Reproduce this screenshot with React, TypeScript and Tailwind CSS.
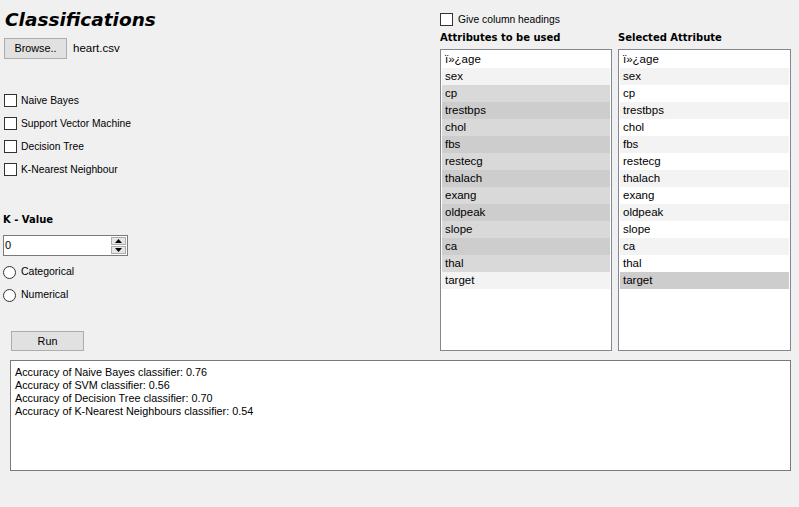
import React from "react";

const attrs = ["ï»¿age", "sex", "cp", "trestbps", "chol", "fbs", "restecg", "thalach", "exang", "oldpeak", "slope", "ca", "thal", "target"];

function rowBg(i: number, selected: boolean) {
  if (selected) return i % 2 === 0 ? "bg-[#d9d9d9]" : "bg-[#cdcdcd]";
  return i % 2 === 0 ? "bg-white" : "bg-[#f3f3f3]";
}

function Check({ label }: { label: string }) {
  return (
    <div className="flex h-[23px] items-center pl-[4px]">
      <div className="h-[13px] w-[13px] border border-[#333333] bg-white" />
      <span className="ml-[4px] text-[10.3px] text-black">{label}</span>
    </div>
  );
}

function Radio({ label }: { label: string }) {
  return (
    <div className="flex h-[23px] items-center pl-[3px]">
      <div className="h-[13px] w-[13px] rounded-full border border-[#333333] bg-white" />
      <span className="ml-[5px] text-[10.5px] text-black">{label}</span>
    </div>
  );
}

function List({ selected }: { selected: (i: number) => boolean }) {
  return (
    <div className="h-[302px] border border-[#828790] bg-white p-px">
      {attrs.map((a, i) => (
        <div key={a} className={`flex h-[17px] items-center pl-[3px] pt-px text-[11.5px] text-black ${rowBg(i, selected(i))}`}>
          {a}
        </div>
      ))}
    </div>
  );
}

export default function App() {
  return (
    <div className="h-[507px] w-[799px] overflow-hidden bg-[#f0f0f0]" style={{ fontFamily: '"Liberation Sans", Arial, sans-serif' }}>
      <div className="flex h-[351px]">
        {/* left column */}
        <div className="flex w-[440px] flex-col">
          <div className="ml-[5px] mt-[8px] h-[24px] text-[18.5px] font-bold italic leading-[24px] text-black" style={{ fontFamily: '"DejaVu Sans", sans-serif' }}>
            Classifications
          </div>
          <div className="mt-[6px] flex items-center">
            <div className="ml-[4px] flex h-[21px] w-[63px] items-center justify-center border border-[#adadad] bg-[#e1e1e1] text-[10.8px] text-black">
              Browse..
            </div>
            <span className="ml-[6px] text-[11.5px] text-black">heart.csv</span>
          </div>
          <div className="mt-[30px] flex flex-col">
            <Check label="Naive Bayes" />
            <Check label="Support Vector Machine" />
            <Check label="Decision Tree" />
            <Check label="K-Nearest Neighbour" />
          </div>
          <div className="ml-[3px] mt-[31px] h-[16px] text-[10px] font-bold leading-[16px] text-black" style={{ fontFamily: '"DejaVu Sans", sans-serif' }}>
            K - Value
          </div>
          <div className="ml-[3px] mt-[7px] flex h-[21px] w-[125px] items-center border border-[#7a7a7a] bg-white">
            <span className="ml-[1px] flex-1 text-[11px] text-black">0</span>
            <div className="mr-[1px] flex h-[17px] w-[15px] flex-col">
              <div className="flex h-[8px] items-center justify-center border border-[#acacac] bg-[#e5e5e5]">
                <svg width="7" height="4" viewBox="0 0 7 4"><polygon points="3.5,0 7,4 0,4" fill="#000" /></svg>
              </div>
              <div className="mt-px flex h-[8px] items-center justify-center border border-[#acacac] bg-[#e5e5e5]">
                <svg width="7" height="4" viewBox="0 0 7 4"><polygon points="0,0 7,0 3.5,4" fill="#000" /></svg>
              </div>
            </div>
          </div>
          <div className="mt-[5px] flex flex-col">
            <Radio label="Categorical" />
            <Radio label="Numerical" />
          </div>
          <div className="ml-[11px] mt-[24px] flex h-[21px] w-[73px] items-center justify-center border border-[#adadad] bg-[#e1e1e1] text-[10.8px] text-black">
            Run
          </div>
        </div>
        {/* right area */}
        <div className="flex flex-col">
          <div className="mt-[13px] flex h-[13px] items-center">
            <div className="h-[13px] w-[13px] border border-[#333333] bg-white" />
            <span className="ml-[5px] text-[10.3px] text-black">Give column headings</span>
          </div>
          <div className="mt-[4px] flex gap-[6px]">
            <div className="flex w-[172px] flex-col">
              <div className="h-[15px] text-[10px] font-bold leading-[15px] text-black" style={{ fontFamily: '"DejaVu Sans", sans-serif' }}>
                Attributes to be used
              </div>
              <div className="mt-[4px]">
                <List selected={(i) => i >= 2 && i <= 12} />
              </div>
            </div>
            <div className="flex w-[173px] flex-col">
              <div className="h-[15px] text-[10px] font-bold leading-[15px] text-black" style={{ fontFamily: '"DejaVu Sans", sans-serif' }}>
                Selected Attribute
              </div>
              <div className="mt-[4px]">
                <List selected={(i) => i === 13} />
              </div>
            </div>
          </div>
        </div>
      </div>
      <div className="ml-[10px] mt-[9px] h-[111px] w-[781px] border border-[#7a7a7a] bg-white pl-[4px] pt-[5px] text-[10.8px] leading-[13px] text-black">
        <div>Accuracy of Naive Bayes classifier: 0.76</div>
        <div>Accuracy of SVM classifier: 0.56</div>
        <div>Accuracy of Decision Tree classifier: 0.70</div>
        <div>Accuracy of K-Nearest Neighbours classifier: 0.54</div>
      </div>
    </div>
  );
}
